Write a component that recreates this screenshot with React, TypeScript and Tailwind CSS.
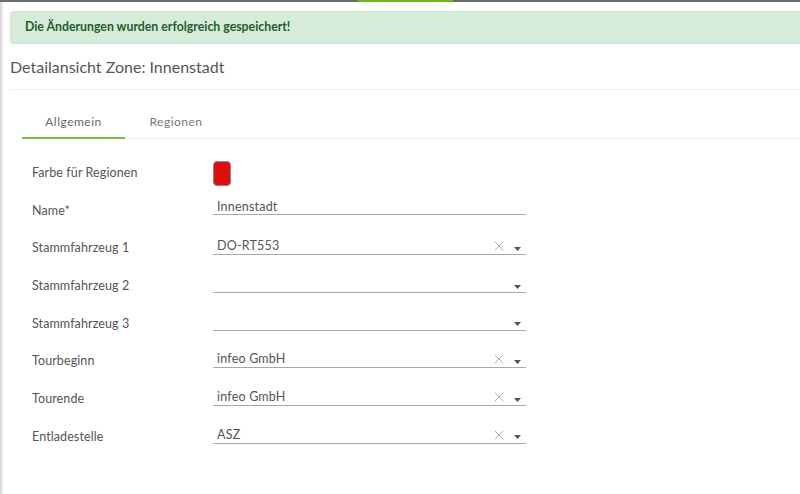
import { X } from "lucide-react";

const font = { fontFamily: "Lato, 'Noto Sans', sans-serif" };

type Row = { label: string; value?: string; kind: "color" | "text" | "select"; clear?: boolean };

const rows: Row[] = [
  { label: "Farbe für Regionen", kind: "color" },
  { label: "Name*", value: "Innenstadt", kind: "text" },
  { label: "Stammfahrzeug 1", value: "DO-RT553", kind: "select", clear: true },
  { label: "Stammfahrzeug 2", kind: "select" },
  { label: "Stammfahrzeug 3", kind: "select" },
  { label: "Tourbeginn", value: "infeo GmbH", kind: "select", clear: true },
  { label: "Tourende", value: "infeo GmbH", kind: "select", clear: true },
  { label: "Entladestelle", value: "ASZ", kind: "select", clear: true },
];

const Caret = () => (
  <svg width="7" height="4" viewBox="0 0 7 4" className="ml-[7px] mt-[5px]">
    <path d="M0 0h7L3.5 4z" fill="#555" />
  </svg>
);

const Field = ({ row }: { row: Row }) => {
  if (row.kind === "color") {
    return <div className="w-[18px] h-[25px] rounded-[4px] bg-[#e00d0d] border border-[#8a8a8a] mt-[-2px]" />;
  }
  const h = row.kind === "text" ? "h-[14px]" : "h-[17px]";
  return (
    <div className={`w-[313px] ${h} border-b border-[#a9a9a9] flex items-center pl-[4px] pr-[5px]`}>
      <span className="flex-1 text-[12.5px] leading-none text-[#555] tracking-[0.2px]">{row.value}</span>
      {row.clear && <X className="w-[16px] h-[16px] text-[#8f8f8f]" strokeWidth={1.1} />}
      {row.kind === "select" && <Caret />}
    </div>
  );
};

export default function App() {
  return (
    <div className="w-[800px] h-[494px] bg-white overflow-hidden relative" style={font}>
      <div className="flex h-[2px]">
        <div className="w-[358px] bg-[#6b6b6b]" />
        <div className="w-[95px] bg-[#6cb81f]" />
        <div className="flex-1 bg-[#6b6b6b]" />
      </div>
      <div className="flex">
        <div className="w-[4px] bg-gradient-to-r from-[#d4d4d4] to-white" />
        <div className="flex-1 h-[492px]">
          <div className="ml-[6px] mt-[9px] h-[33px] bg-[#d5ecdb] rounded-l-[4px] border border-[#cbe6d1] border-r-0 flex items-center pl-[14px]">
            <span className="text-[12.3px] font-bold text-[#1d5e2c]">Die Änderungen wurden erfolgreich gespeichert!</span>
          </div>
          <div className="ml-[6px] h-[46px] flex items-center border-b border-[#ececec]">
            <span className="text-[16px] text-[#555]">Detailansicht Zone: Innenstadt</span>
          </div>
          <div className="pt-[18px]">
            <div className="flex ml-[18px] border-b border-[#ececec] h-[31px]">
              <div className="w-[103px] flex justify-center pt-[5px] border-b-2 border-[#7dbb45] mb-[-1px]">
                <span className="text-[12px] tracking-[0.5px] text-[#666]">Allgemein</span>
              </div>
              <div className="w-[102px] flex justify-center pt-[5px]">
                <span className="text-[12px] tracking-[0.5px] text-[#777]">Regionen</span>
              </div>
            </div>
            <div className="pl-[28px] pt-[24px] flex flex-col gap-[17.7px]">
              {rows.map((r) => (
                <div key={r.label} className="flex items-start h-[20px]">
                  <div className="w-[181px] text-[12.5px] leading-[20px] text-[#555] tracking-[0.1px]">{r.label}</div>
                  <Field row={r} />
                </div>
              ))}
            </div>
          </div>
        </div>
      </div>
    </div>
  );
}
